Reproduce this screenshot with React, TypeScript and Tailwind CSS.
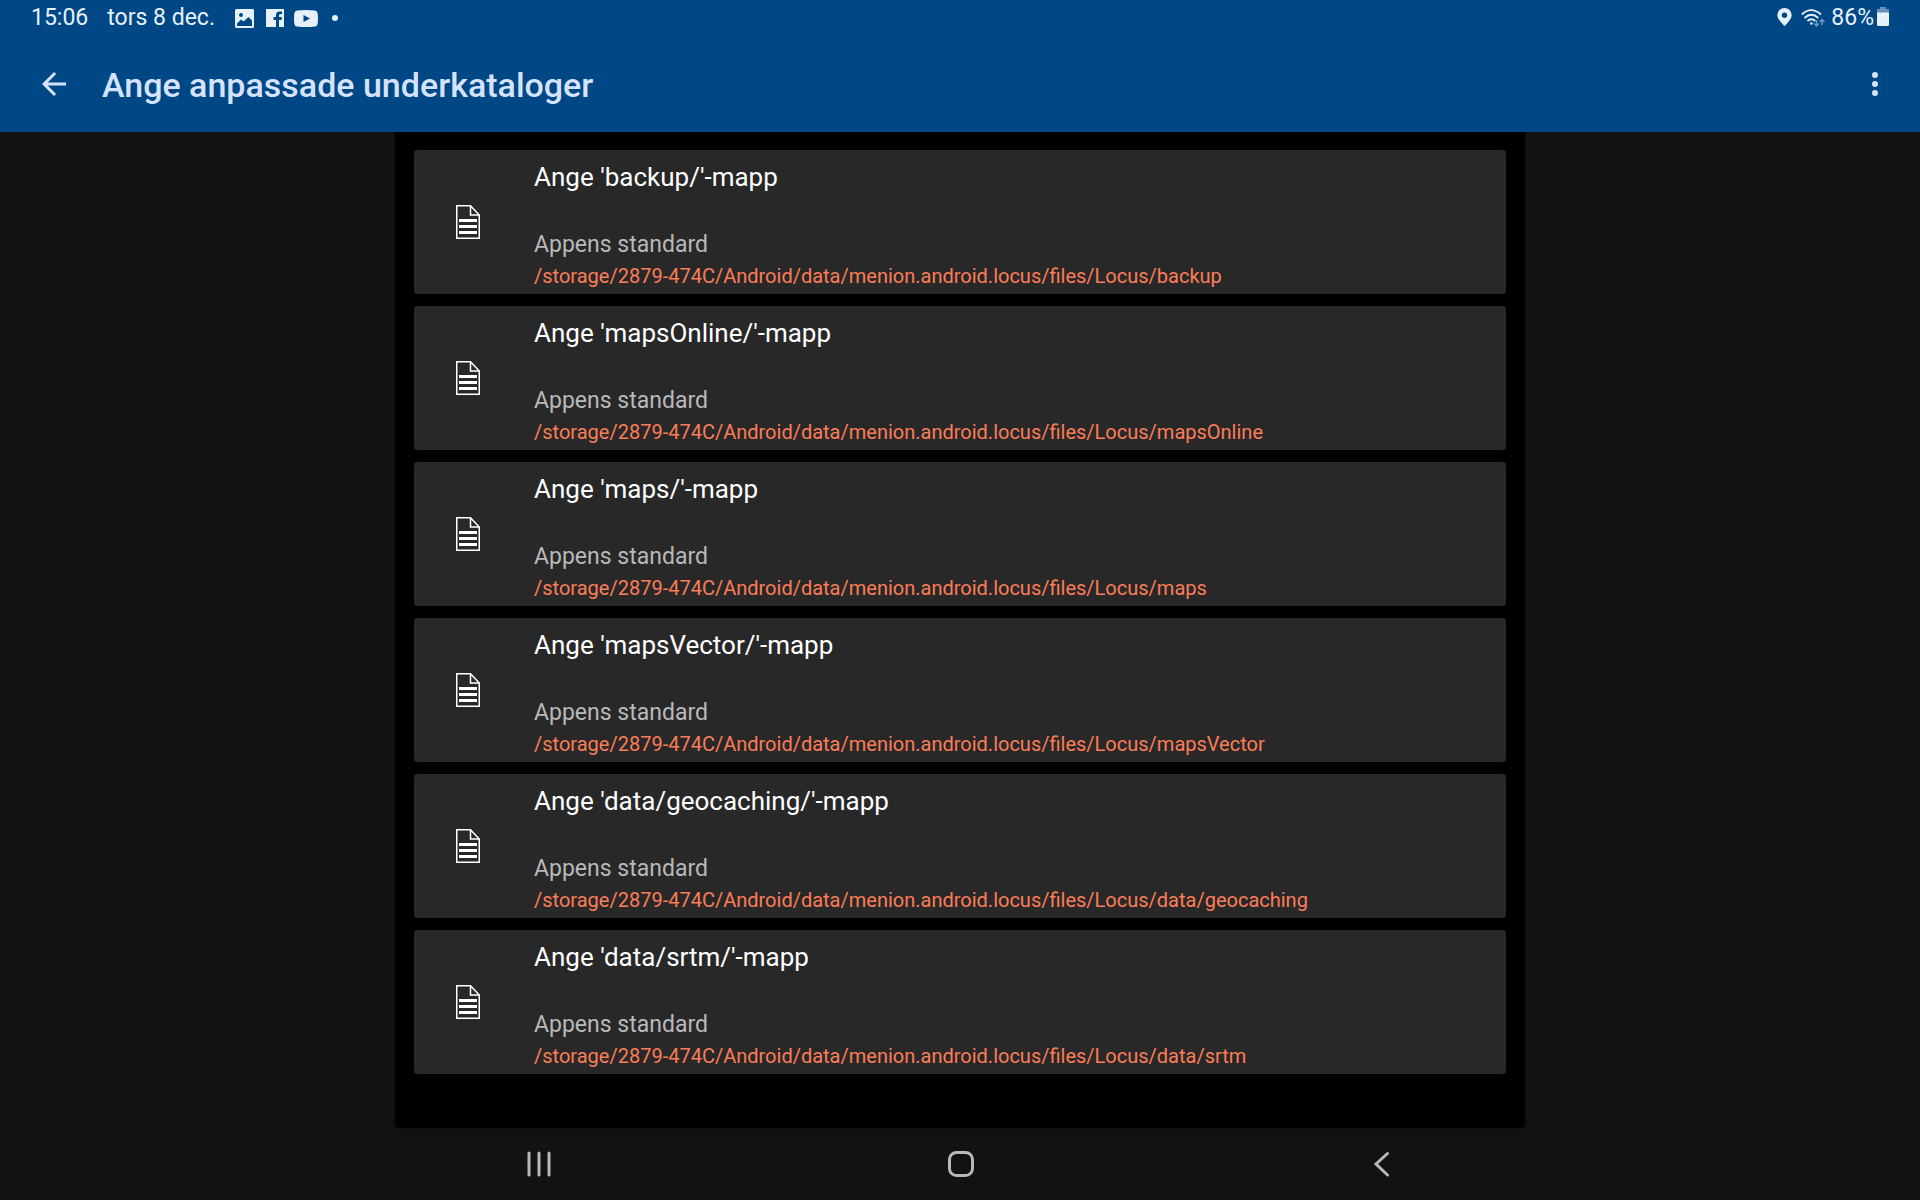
import type { ReactNode } from "react";

const folders = ["backup", "mapsOnline", "maps", "mapsVector", "data/geocaching", "data/srtm"];

const ROOT = "/storage/2879-474C/Android/data/menion.android.locus/files/Locus/";

const DocumentIcon = () => (
  <svg width="24" height="34" viewBox="0 0 24 34" fill="none" stroke="#fff" className="shrink-0">
    <path d="M0.75 0.75H14.5L23.25 10V33.25H0.75Z" strokeWidth="1.5" />
    <path d="M14.5 0.75V10H23.25" strokeWidth="1.5" />
    <path d="M3 15.5H21M3 21.5H21M3 27.5H21" strokeWidth="3" />
  </svg>
);

const StatusBar = () => (
  <div className="flex h-9 items-center justify-between px-[31px] text-[23px] leading-9 text-[#e6f1fc]">
    <div className="flex items-center">
      <span>15:06</span>
      <span className="ml-[19px]">tors 8 dec.</span>
      {/* Notification icons */}
      <div className="ml-5 flex items-center gap-3">
        <svg width="19" height="19" viewBox="0 0 19 19">
          <path
            fill="#e6f1fc"
            fillRule="evenodd"
            d="M1.5 0H17.5Q19 0 19 1.5V17.5Q19 19 17.5 19H1.5Q0 19 0 17.5V1.5Q0 0 1.5 0ZM2 14.5V17H17V11.500L13.500 8L8.500 12.500L6 10.500ZM6 4A2 2 0 1 0 6 8A2 2 0 1 0 6 4Z"
          />
        </svg>
        <svg width="18" height="18" viewBox="0 0 18 18" fill="#e6f1fc">
          <path d="M0 0H18V18H13V11H15.5L16 8H13V6.5Q13 5 14.5 5H16V2.500H13.500Q10 2.500 10 6V8H7.500V11H10V18H0Z" />
        </svg>
        <svg width="24" height="17" viewBox="0 0 24 17" className="-ml-0.5">
          <path
            fill="#e6f1fc"
            fillRule="evenodd"
            d="M3 0.500Q12 -0.500 21 0.500Q23.500 0.800 23.700 3.500Q24.300 8.500 23.700 13.500Q23.500 16.200 21 16.500Q12 17.500 3 16.500Q0.500 16.200 0.300 13.500Q-0.300 8.500 0.300 3.500Q0.500 0.800 3 0.500ZM9.500 5V12L16 8.500Z"
          />
        </svg>
        <span className="ml-0.5 size-1.5 rounded-full bg-[#e6f1fc]" />
      </div>
    </div>
    <div className="flex items-center">
      <svg width="15" height="20" viewBox="0 0 15 20">
        <path
          fill="#e6f1fc"
          fillRule="evenodd"
          d="M7.500 0A7.200 7.200 0 0 0 0.300 7.200C0.300 11.500 7.500 18 7.500 18S14.700 11.500 14.700 7.200A7.200 7.200 0 0 0 7.500 0ZM7.500 4.500A2.700 2.700 0 1 1 7.500 9.900A2.700 2.700 0 1 1 7.500 4.500Z"
        />
      </svg>
      <svg width="25" height="18" viewBox="0 0 25 18" fill="none" className="ml-[9px]">
        <g stroke="#e6f1fc" strokeWidth="1.800">
          <path d="M0.800 5.500Q10 -3.200 20 5.500" />
          <path d="M3.500 9Q10.400 2.600 17.300 9" />
          <path d="M6.500 12Q10.400 8.500 14.300 12" />
        </g>
        <circle cx="10.400" cy="14.500" r="1.300" fill="#e6f1fc" />
        <path
          d="M15.500 11V17M13 14.500L15.500 17L18 14.500M21 16V10.500M18.500 13L21 10.500L23.500 13"
          stroke="#6f97bf"
          strokeWidth="1.500"
        />
      </svg>
      <span className="ml-[5px]">86%</span>
      <svg width="12" height="22" viewBox="0 0 12 22" className="ml-[3px]">
        <path d="M3 0H9V2H12V6H0V2H3Z" fill="#6690bb" />
        <path d="M0 5.500H12V17.500Q12 19 10.500 19H1.500Q0 19 0 17.500Z" fill="#e6f1fc" />
      </svg>
    </div>
  </div>
);

const FolderCard = ({ folder }: { folder: string }) => (
  <li className="flex items-center rounded-[3px] bg-[#282828] pl-[42px]">
    <DocumentIcon />
    <div className="ml-[54px] min-w-0 pt-[9px] pb-0.5">
      <h2 className="text-[26px] leading-9 text-white">Ange '{folder}/'-mapp</h2>
      <p className="mt-[35px] text-[23px] leading-[30px] text-[#b9b9b9]">Appens standard</p>
      <p className="truncate text-[20px] leading-8 text-[#fb7d57]">{ROOT + folder}</p>
    </div>
  </li>
);

const NavButton = ({ label, children }: { label: string; children: ReactNode }) => (
  <button type="button" aria-label={label} className="flex h-[72px] items-center justify-center text-[#b8b8b8]">
    {children}
  </button>
);

export default function App() {
  return (
    <div className="flex min-h-screen flex-col bg-[#121212] font-['Roboto',sans-serif]">
      <header className="bg-[#004785]">
        <StatusBar />
        <div className="flex h-24 items-center pr-[27px] pl-9 text-[#d5e3ff]">
          <button type="button" aria-label="Tillbaka">
            <svg width="36" height="36" viewBox="0 0 24 24" fill="currentColor">
              <path d="M20 11H7.830l5.590-5.590L12 4l-8 8 8 8 1.410-1.410L7.830 13H20v-2z" />
            </svg>
          </button>
          <h1 className="ml-[30px] flex-1 pt-0.5 text-[34px] leading-10 font-medium">
            Ange anpassade underkataloger
          </h1>
          <button type="button" aria-label="Fler alternativ">
            <svg width="36" height="36" viewBox="0 0 24 24" fill="currentColor">
              <circle cx="12" cy="6" r="2" />
              <circle cx="12" cy="12" r="2" />
              <circle cx="12" cy="18" r="2" />
            </svg>
          </button>
        </div>
      </header>

      <main className="mx-auto w-full max-w-[1130px] flex-1 rounded-b-sm bg-black px-[19px] py-[18px] shadow-md">
        <ul className="flex flex-col gap-3">
          {folders.map((folder) => (
            <FolderCard key={folder} folder={folder} />
          ))}
        </ul>
      </main>

      {/* System navigation */}
      <nav className="mx-auto grid w-[66%] grid-cols-3 pl-0.5">
        <NavButton label="Senaste">
          <svg width="26" height="26" viewBox="0 0 26 26" stroke="currentColor" strokeWidth="3" strokeLinecap="round">
            <path d="M3 2V24M13 2V24M23 2V24" />
          </svg>
        </NavButton>
        <NavButton label="Hem">
          <svg width="26" height="26" viewBox="0 0 26 26" fill="none" stroke="currentColor" strokeWidth="3">
            <rect x="1.500" y="1.500" width="23" height="23" rx="7" />
          </svg>
        </NavButton>
        <NavButton label="Bakåt">
          <svg
            width="26"
            height="26"
            viewBox="0 0 26 26"
            fill="none"
            stroke="currentColor"
            strokeWidth="3"
            strokeLinecap="round"
          >
            <path d="M17.500 2.500L6 13L17.500 24" />
          </svg>
        </NavButton>
      </nav>
    </div>
  );
}
